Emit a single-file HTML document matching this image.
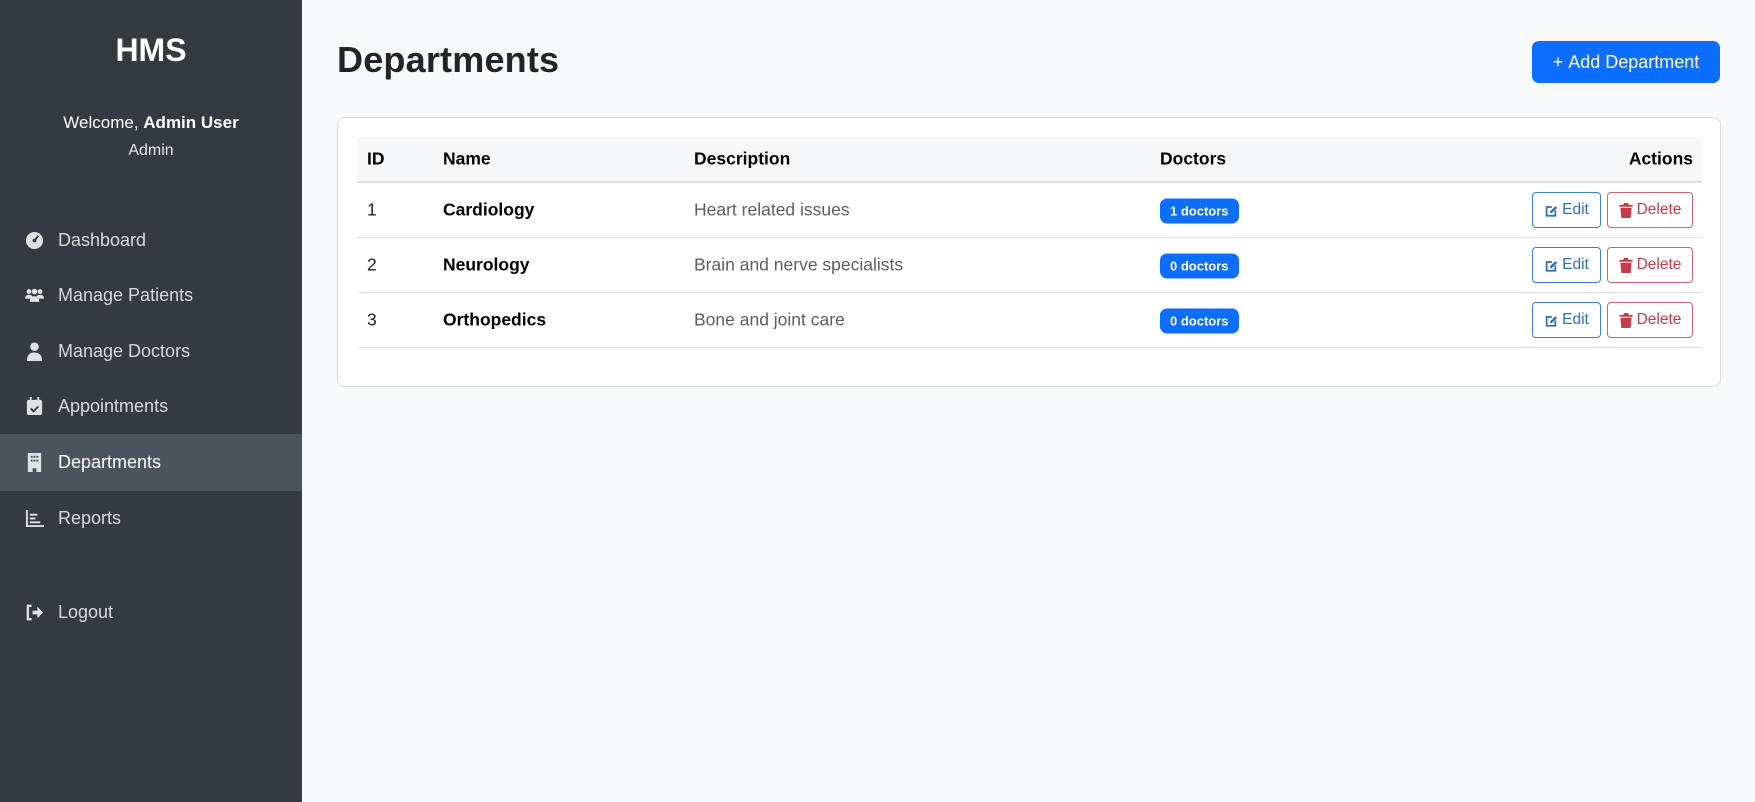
<!DOCTYPE html>
<html><head><style>
*{box-sizing:border-box;margin:0;padding:0}
body{width:1755px;height:802px;overflow:hidden;font-family:"Liberation Sans",sans-serif;background:#f8f9fa;color:#212529;position:relative}
.sb{position:absolute;left:0;top:0;width:302px;height:802px;background:#343a40;color:#fff}
.hms{position:absolute;top:32px;width:302px;text-align:center;font-size:32px;font-weight:bold}
.wel{position:absolute;top:113px;width:302px;text-align:center;font-size:17px}
.adm{position:absolute;top:142px;width:302px;text-align:center;font-size:16px;color:#e6e6e6}
.nav{position:absolute;left:0;width:302px;height:57px;display:flex;align-items:center;font-size:18px;color:rgba(255,255,255,.8)}
.nav svg{position:absolute;left:25px;width:19px;height:19px;fill:#dfe1e3}
.nav span{position:absolute;left:58px}
.act{background:#4b545c;color:#fff}
h1{position:absolute;left:337px;top:39px;font-size:36px;font-weight:bold;letter-spacing:.2px}
.add{position:absolute;left:1532px;top:41px;width:188px;height:42px;background:#0d6efd;border-radius:7px;color:#fff;font-size:18px;display:flex;align-items:center;justify-content:center}
.card{position:absolute;left:337px;top:117px;width:1384px;height:270px;background:#fff;border:1px solid #dadde0;border-radius:8px}
.thead{position:absolute;left:19px;top:19px;width:1345px;height:46px;background:#f6f7f8;border-bottom:2px solid #dee2e6}
.row{position:absolute;left:19px;width:1345px;height:55px;border-bottom:1px solid #dee2e6}
.c{position:absolute;top:50%;transform:translateY(-50%);font-size:17.5px;white-space:nowrap}
.b{font-weight:bold;color:#000}
.g{color:#595f66}
.badge{background:#0d6efd;color:#fff;font-size:13px;font-weight:bold;border-radius:7px;padding:5px 10px}
.btn{position:absolute;top:50%;transform:translateY(-50%);height:36px;border-radius:4px;display:flex;align-items:center;justify-content:center;font-size:15.5px;gap:4px}
.btn svg{width:14px;height:15px}
.ed{left:1175px;width:69px;border:1px solid #3d7fc6;color:#2d6fb8}
.de{left:1250px;width:86px;border:1px solid #c96570;color:#c53b48}
</style></head><body>
<div class="sb">
<div class="hms">HMS</div>
<div class="wel">Welcome, <b>Admin User</b></div>
<div class="adm">Admin</div>
<div class="nav" style="top:212px"><svg viewBox="0 0 20 20"><circle cx="10" cy="10" r="9"/><circle cx="10" cy="10" r="2" fill="#343a40"/><path d="M10 10l4-5" stroke="#343a40" stroke-width="2"/></svg><span>Dashboard</span></div>
<div class="nav" style="top:267px"><svg viewBox="0 0 24 20"><circle cx="5" cy="5" r="3"/><circle cx="12" cy="5" r="3.5"/><circle cx="19" cy="5" r="3"/><path d="M0 14q0-5 5-5t5 5zM6 18q0-7 6-7t6 7zM14 14q0-5 5-5t5 5z"/></svg><span>Manage Patients</span></div>
<div class="nav" style="top:323px"><svg viewBox="0 0 20 20"><circle cx="10" cy="5" r="4.5"/><path d="M2 20q0-9 8-9t8 9z"/></svg><span>Manage Doctors</span></div>
<div class="nav" style="top:378px"><svg viewBox="0 0 20 20"><rect x="2" y="3" width="16" height="16" rx="2"/><rect x="5" y="0" width="2" height="4"/><rect x="13" y="0" width="2" height="4"/><path d="M6 12l3 3 5-5" stroke="#343a40" stroke-width="2" fill="none"/></svg><span>Appointments</span></div>
<div class="nav act" style="top:434px"><svg viewBox="0 0 20 20"><path d="M3 0h14v20h-5v-4h-4v4H3z"/><g fill="#4b545c"><rect x="6" y="3" width="2" height="2"/><rect x="9" y="3" width="2" height="2"/><rect x="12" y="3" width="2" height="2"/><rect x="6" y="7" width="2" height="2"/><rect x="9" y="7" width="2" height="2"/><rect x="12" y="7" width="2" height="2"/></g></svg><span>Departments</span></div>
<div class="nav" style="top:490px"><svg viewBox="0 0 20 20"><path d="M1 1h2v16h17v2H1z"/><rect x="5" y="5" width="8" height="2"/><rect x="5" y="9" width="6" height="2"/><rect x="5" y="13" width="11" height="2"/></svg><span>Reports</span></div>
<div class="nav" style="top:584px"><svg viewBox="0 0 20 20"><path d="M7 3H3v14h4" stroke="#dfe1e3" stroke-width="2.5" fill="none"/><path d="M8 8h5V4l6 6-6 6v-4H8z"/></svg><span>Logout</span></div>
</div>
<h1>Departments</h1>
<div class="add">+&nbsp;Add Department</div>
<div class="card">
<div class="thead">
<div class="c b" style="left:10px">ID</div>
<div class="c b" style="left:86px">Name</div>
<div class="c b" style="left:337px">Description</div>
<div class="c b" style="left:803px">Doctors</div>
<div class="c b" style="right:9px">Actions</div>
</div>
<div class="row" style="top:65px">
<div class="c" style="left:10px">1</div><div class="c b" style="left:86px">Cardiology</div><div class="c g" style="left:337px">Heart related issues</div><div class="c" style="left:803px"><span class="badge">1 doctors</span></div>
<div class="btn ed"><svg viewBox="0 0 16 16"><path d="M2 3h7v2H4v8h8V8h2v7H2z" fill="#2d6fb8"/><path d="M7 9l6-6 2 2-6 6H7z" fill="#2d6fb8"/></svg>Edit</div><div class="btn de"><svg viewBox="0 0 14 16"><path d="M0 2h4l1-2h4l1 2h4v2H0zM1 5h12l-1 11H2z" fill="#c53b48"/></svg>Delete</div></div>
<div class="row" style="top:120px">
<div class="c" style="left:10px">2</div><div class="c b" style="left:86px">Neurology</div><div class="c g" style="left:337px">Brain and nerve specialists</div><div class="c" style="left:803px"><span class="badge">0 doctors</span></div>
<div class="btn ed"><svg viewBox="0 0 16 16"><path d="M2 3h7v2H4v8h8V8h2v7H2z" fill="#2d6fb8"/><path d="M7 9l6-6 2 2-6 6H7z" fill="#2d6fb8"/></svg>Edit</div><div class="btn de"><svg viewBox="0 0 14 16"><path d="M0 2h4l1-2h4l1 2h4v2H0zM1 5h12l-1 11H2z" fill="#c53b48"/></svg>Delete</div></div>
<div class="row" style="top:175px">
<div class="c" style="left:10px">3</div><div class="c b" style="left:86px">Orthopedics</div><div class="c g" style="left:337px">Bone and joint care</div><div class="c" style="left:803px"><span class="badge">0 doctors</span></div>
<div class="btn ed"><svg viewBox="0 0 16 16"><path d="M2 3h7v2H4v8h8V8h2v7H2z" fill="#2d6fb8"/><path d="M7 9l6-6 2 2-6 6H7z" fill="#2d6fb8"/></svg>Edit</div><div class="btn de"><svg viewBox="0 0 14 16"><path d="M0 2h4l1-2h4l1 2h4v2H0zM1 5h12l-1 11H2z" fill="#c53b48"/></svg>Delete</div></div>
</div>
</body></html>
